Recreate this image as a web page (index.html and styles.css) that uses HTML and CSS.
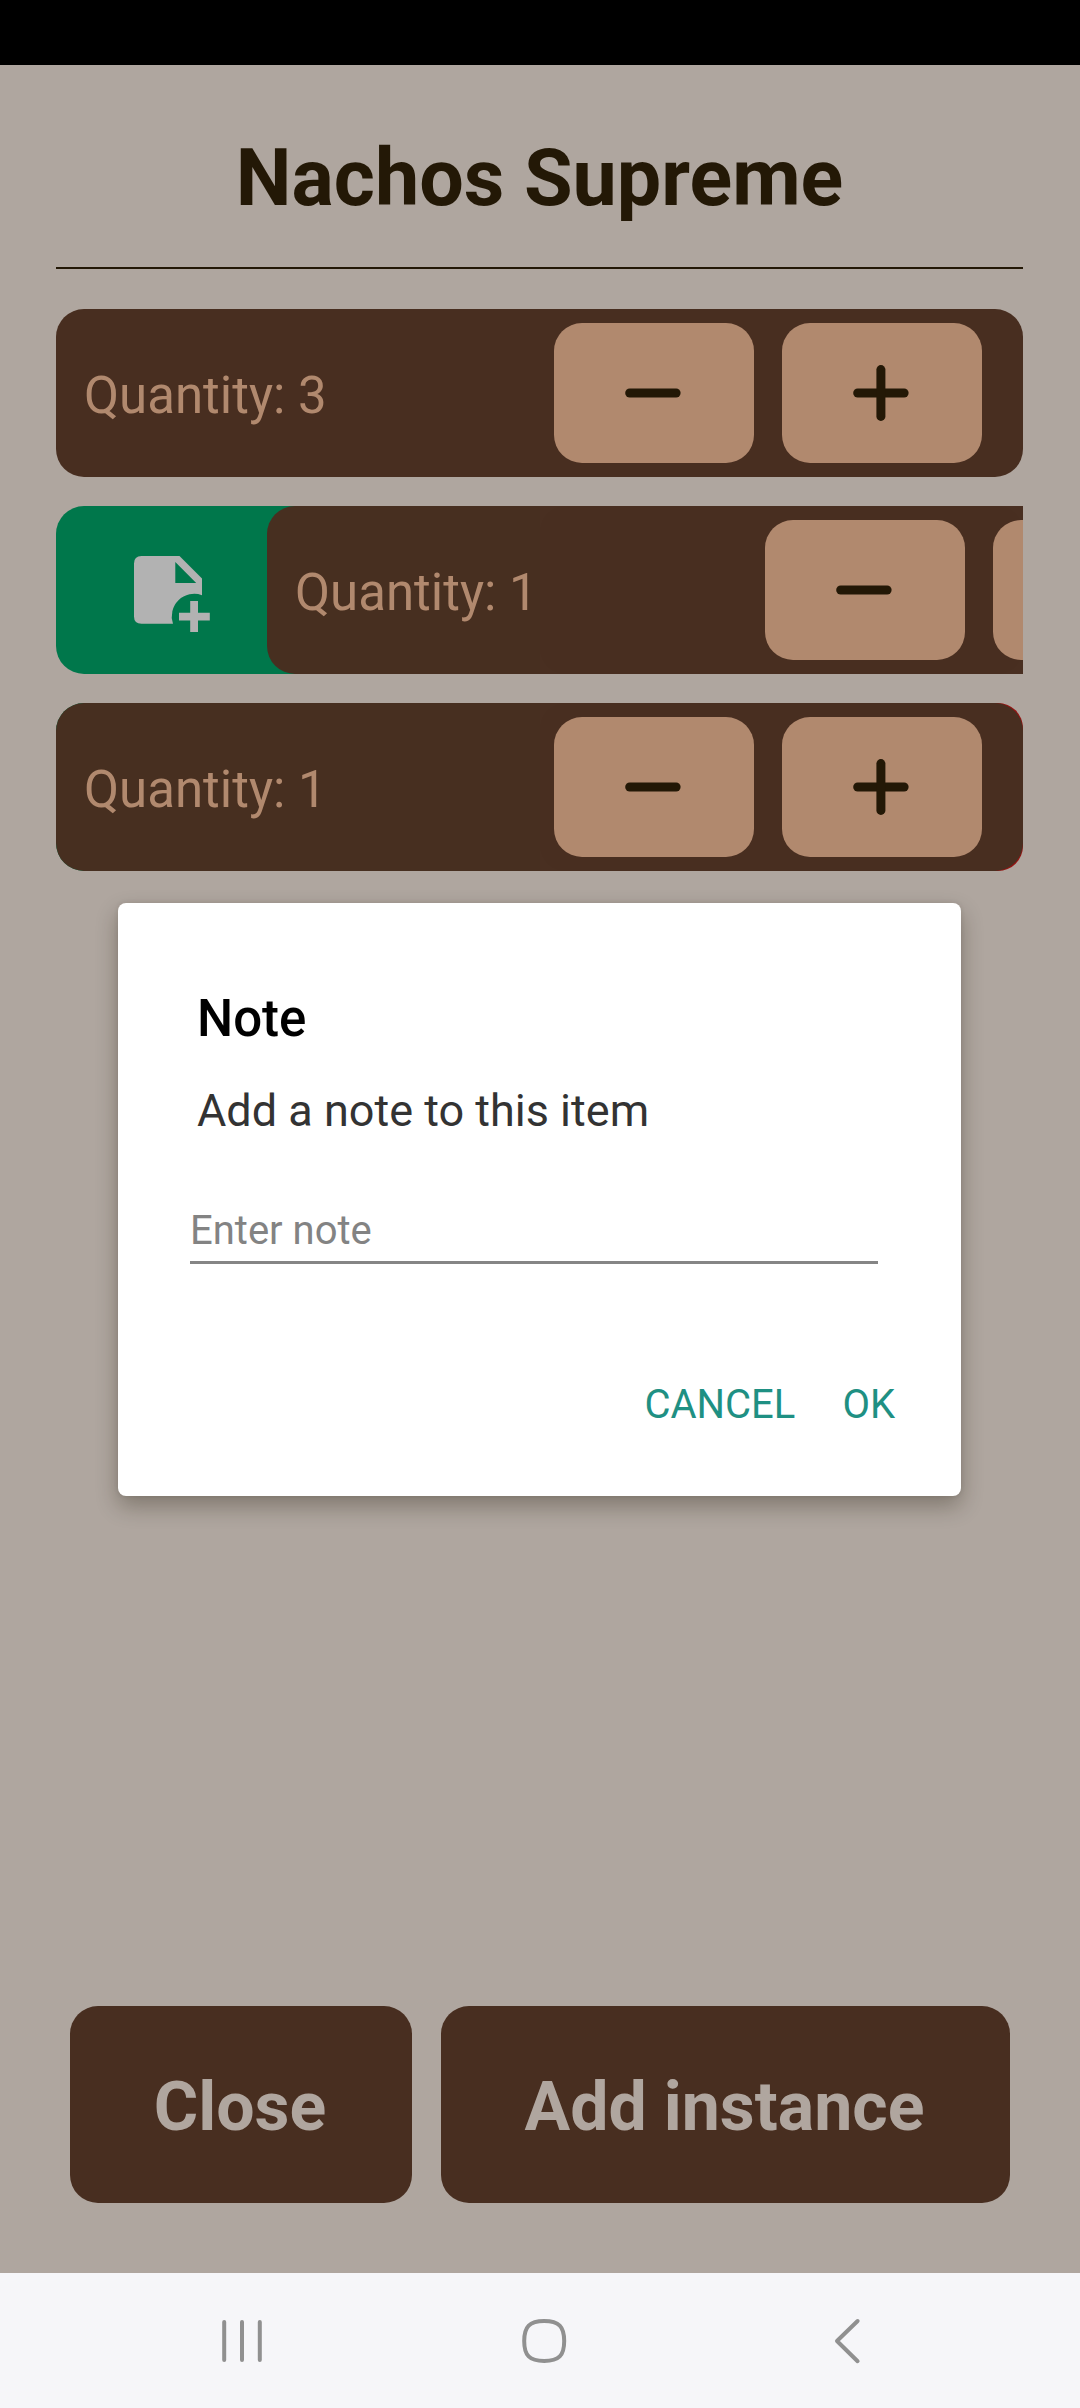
FILE: index.html
```html
<!DOCTYPE html>
<html lang="en">
<head>
<meta charset="utf-8">
<title>Nachos Supreme</title>
<link rel="stylesheet" href="styles.css">
</head>
<body>
<svg class="defs" aria-hidden="true">
  <symbol id="minus" viewBox="0 0 56 56"><rect x="0.2" y="23.5" width="55.4" height="9" rx="4.5"/></symbol>
  <symbol id="plus" viewBox="0 0 56 56"><rect x="0.2" y="23.5" width="55.4" height="9" rx="4.5"/><rect x="23.4" y="0.1" width="9" height="55.8" rx="4.5"/></symbol>
</svg>
<div class="screen">
  <div class="status-bar"></div>
  <main class="content">
    <h1 class="title">Nachos Supreme</h1>
    <div class="rows">
      <section class="row">
        <div class="card">
          <span class="quantity">Quantity: 3</span>
          <button class="step"><svg class="glyph"><use href="#minus"/></svg></button>
          <button class="step"><svg class="glyph"><use href="#plus"/></svg></button>
        </div>
      </section>
      <section class="row swipeable">
        <div class="action note">
          <svg class="note-icon" viewBox="134 556 76 76">
            <path fill-rule="evenodd" d="M141.500 556H179.500L202 578.500V595.200A22.500 22.500 0 0 0 173 623.700H141.500Q134 623.700 134 616.500V563.500Q134 556 141.500 556ZM175.300 562V583H196.200Z"/>
            <path d="M190.200 601H198V612.700H209.800V620.500H198V632H190.200V620.500H179V612.700H190.200Z"/>
          </svg>
        </div>
        <div class="action delete"></div>
        <div class="card shifted">
          <span class="quantity">Quantity: 1</span>
          <button class="step"><svg class="glyph"><use href="#minus"/></svg></button>
          <button class="step"><svg class="glyph"><use href="#plus"/></svg></button>
        </div>
      </section>
      <section class="row swipeable">
        <div class="action note"></div>
        <div class="action delete"></div>
        <div class="card">
          <span class="quantity">Quantity: 1</span>
          <button class="step"><svg class="glyph"><use href="#minus"/></svg></button>
          <button class="step"><svg class="glyph"><use href="#plus"/></svg></button>
        </div>
      </section>
    </div>
    <footer class="actions">
      <button class="big close">Close</button>
      <button class="big add">Add instance</button>
    </footer>
  </main>
  <nav class="nav-bar">
    <svg class="nav-icons" viewBox="0 0 1080 135">
      <path d="M224.200 49V87M242 49V87M259.800 49V87"/>
      <path d="M544.200 48C559 48 564.200 53.500 564.200 68S559 88 544.200 88S524.200 82.500 524.200 68S529.500 48 544.200 48Z"/>
      <path d="M857.600 48L837 68L857.600 88.200"/>
    </svg>
  </nav>
  <div class="dialog" role="dialog">
    <h2 class="dialog-title">Note</h2>
    <p class="dialog-text">Add a note to this item</p>
    <div class="field">Enter note</div>
    <div class="dialog-actions">
      <button class="link">CANCEL</button>
      <button class="link">OK</button>
    </div>
  </div>
</div>
</body>
</html>
```
FILE: styles.css
```css
* { box-sizing: border-box; }
body { margin: 0; font-family: Roboto, "Liberation Sans", sans-serif; }
button { border: 0; margin: 0; padding: 0; font: inherit; color: inherit; background: none; }
.defs { position: absolute; width: 0; height: 0; }

.screen {
  position: relative;
  display: flex;
  flex-direction: column;
  width: 1080px;
  height: 2408px;
  overflow: hidden;
  background: #afa69f;
}
.status-bar { height: 65px; background: #000; }
.content {
  flex: 1;
  display: flex;
  flex-direction: column;
  padding: 65px 57px 70px 56px;
}
.title {
  margin: 0;
  height: 139px;
  padding-top: 1px;
  border-bottom: 2px solid #231806;
  color: #231806;
  font-size: 79px;
  font-weight: 700;
  line-height: 94px;
  text-align: center;
}
.rows { display: flex; flex-direction: column; gap: 29px; margin-top: 40px; }
.row { display: grid; grid-template-columns: 1fr 1fr; height: 168px; overflow: hidden; }
.card {
  grid-area: 1 / 1 / 2 / 3;
  display: flex;
  align-items: center;
  gap: 28px;
  padding: 0 41px 0 28px;
  border-radius: 28px;
  background: #482e20;
}
.swipeable .card { background: rgba(72, 46, 32, 0.993); }
.shifted { transform: translateX(211px); }
.action { grid-row: 1; border-radius: 25px; }
.note { grid-column: 1; background: #00774b; border-radius: 28px 0 0 28px; }
.delete { grid-column: 2; background: #951412; }
.note-icon { display: block; width: 76px; height: 76px; margin: 50px 0 0 78px; fill: #b2b2b2; }
.quantity {
  flex: 1;
  padding-top: 6px;
  color: #b1896e;
  font-size: 51px;
  line-height: 60px;
}
.step {
  display: flex;
  align-items: center;
  justify-content: center;
  width: 200px;
  height: 140px;
  padding: 0 2px 1px 0;
  border-radius: 28px;
  background: #b1896e;
}
.glyph { width: 56px; height: 56px; fill: #231806; }

.actions { display: flex; gap: 29px; margin-top: auto; padding: 0 13px 0 14px; }
.big {
  height: 197px;
  padding: 5px 2px 0 0;
  border-radius: 28px;
  background: #482e20;
  color: #b0a69f;
  font-size: 68px;
  font-weight: 700;
  line-height: 80px;
}
.close { width: 342px; }
.add { flex: 1; }

.nav-bar { height: 135px; background: #f6f6f9; }
.nav-icons {
  display: block;
  width: 1080px;
  height: 135px;
  fill: none;
  stroke: #909090;
  stroke-width: 4;
  stroke-linecap: round;
  stroke-linejoin: round;
}

.dialog {
  position: absolute;
  left: 118px;
  top: 903px;
  width: 843px;
  height: 593px;
  padding: 86px 66px 0 72px;
  border-radius: 8px;
  background: #fff;
  box-shadow: 0 10px 22px rgba(30, 25, 10, 0.32), 0 0 5px rgba(30, 25, 10, 0.1);
}
.dialog-title {
  margin: 0 0 0 7px;
  color: #000;
  font-size: 51px;
  font-weight: 500;
  line-height: 60px;
}
.dialog-text {
  margin: 35px 0 0 7px;
  color: #333;
  font-size: 45px;
  line-height: 54px;
}
.field {
  width: 688px;
  height: 58px;
  margin-top: 68px;
  border-bottom: 3px solid #858585;
  color: #838383;
  font-size: 40px;
  line-height: 50px;
}
.dialog-actions {
  display: flex;
  justify-content: flex-end;
  gap: 46px;
  margin-top: 116px;
  color: #1f9083;
  font-size: 40px;
  line-height: 50px;
}
.link:first-child { margin-right: 1px; }
```
